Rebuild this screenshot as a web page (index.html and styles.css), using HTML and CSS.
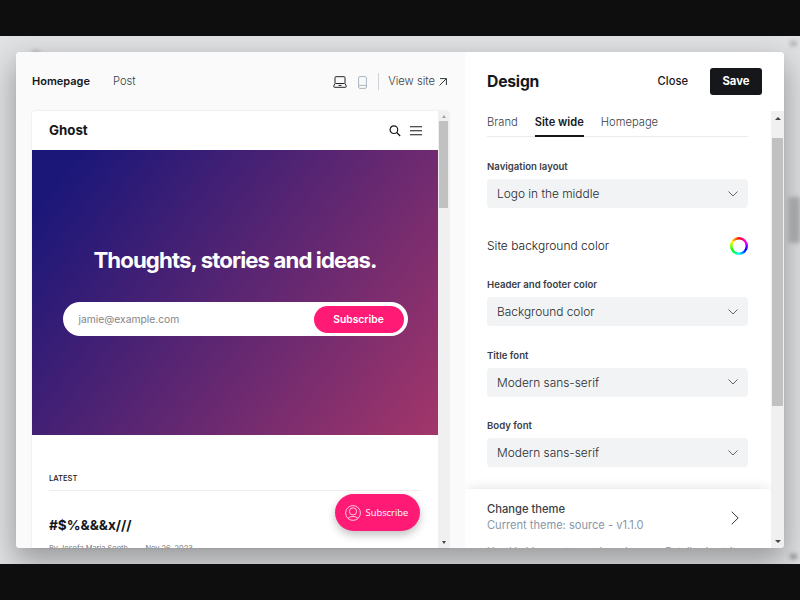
FILE: index.html
```html
<!DOCTYPE html>
<html lang="en">
<head>
<meta charset="utf-8">
<title>Design</title>
<link rel="stylesheet" href="styles.css">
</head>
<body>
<div class="stage">
  <i class="ghost-mark mark-title"></i><i class="ghost-mark mark-up"></i><i class="ghost-mark mark-thumb"></i><i class="ghost-mark mark-down"></i>
  <main class="modal">
    <section class="preview">
      <header class="preview-bar">
        <nav class="pages"><b>Homepage</b><span>Post</span></nav>
        <div class="tools">
          <svg class="laptop" width="14" height="12" viewBox="0 0 14 12" fill="none" stroke="#222529" stroke-linejoin="round"><rect x="2" y=".7" width="10" height="6.8" rx=".8"/><path d="M2 7.5L.7 10.2Q.6 11.3 1.6 11.3H12.4Q13.4 11.3 13.3 10.2L12 7.5M5.5 9.4H8.5"/></svg>
          <svg class="phone" width="9" height="13" viewBox="0 0 9 13" fill="none" stroke="#abb7c4"><rect x=".6" y=".6" width="7.8" height="11.8" rx="1.4"/><path d="M.6 9.4H8.4"/></svg>
          <span class="rule"></span>
          <span class="view">View site</span>
          <svg class="out" width="8" height="8" viewBox="0 0 8 8" fill="none" stroke="#33373b"><path d="M.5 7.5L7.4 .6M1 .6H7.4V7"/></svg>
        </div>
      </header>
      <div class="browser">
        <div class="page">
          <header class="site-head">
            <strong>Ghost</strong>
            <svg width="12" height="12" viewBox="0 0 12 12" fill="none" stroke="#15171a" stroke-width="1.2"><circle cx="4.9" cy="4.7" r="3.8"/><path d="M7.7 7.5L11.2 11"/></svg>
            <svg width="12" height="10" viewBox="0 0 12 10" fill="none" stroke="#15171a" stroke-width="1.1"><path d="M0 .8H12M0 4.8H12M0 8.8H12"/></svg>
          </header>
          <div class="hero">
            <h1>Thoughts, stories and ideas.</h1>
            <div class="signup"><span>jamie@example.com</span><b>Subscribe</b></div>
          </div>
          <div class="latest">
            <h2>LATEST</h2>
            <h3>#$%&amp;&amp;&amp;x///</h3>
            <p>By Josefa Maria Sooth <span>—</span> Nov 26, 2023</p>
          </div>
          <div class="portal">
            <svg width="16" height="16" viewBox="0 0 16 16" fill="none" stroke="#fff" stroke-width=".75"><circle cx="8" cy="8" r="7.4"/><circle cx="8" cy="6.4" r="3.6"/><path d="M3 13.3Q5 11.4 8 11.4T13 13.3"/></svg>
            <span>Subscribe</span>
          </div>
        </div>
        <div class="scroll small"><i class="up"></i><i class="thumb"></i><i class="down"></i></div>
      </div>
    </section>
    <aside class="settings">
      <header class="set-head"><h2>Design</h2><span>Close</span><b>Save</b></header>
      <div class="set-body">
        <div class="form">
          <nav class="tabs"><span>Brand</span><b>Site wide</b><span>Homepage</span></nav>
          <div class="field first"><label>Navigation layout</label><div class="select"><span>Logo in the middle</span><svg width="10" height="6" viewBox="0 0 10 6"><path d="M.5 .5L5 5L9.5 .5"/></svg></div></div>
          <div class="color"><span>Site background color</span><i class="wheel"></i></div>
          <div class="field"><label>Header and footer color</label><div class="select"><span>Background color</span><svg width="10" height="6" viewBox="0 0 10 6"><path d="M.5 .5L5 5L9.5 .5"/></svg></div></div>
          <div class="field"><label>Title font</label><div class="select"><span>Modern sans-serif</span><svg width="10" height="6" viewBox="0 0 10 6"><path d="M.5 .5L5 5L9.5 .5"/></svg></div></div>
          <div class="field"><label>Body font</label><div class="select"><span>Modern sans-serif</span><svg width="10" height="6" viewBox="0 0 10 6"><path d="M.5 .5L5 5L9.5 .5"/></svg></div></div>
          <footer class="theme">
            <div class="theme-row"><div><b>Change theme</b><span>Current theme: source - v1.1.0</span></div>
            <svg width="8" height="14" viewBox="0 0 8 14" fill="none" stroke="#33373b"><path d="M.7 .7L7.2 7L.7 13.3"/></svg></div>
            <p class="hint">Used in blog posts, cards and pages. Details about it</p>
          </footer>
        </div>
        <div class="scroll"><i class="up"></i><i class="thumb"></i><i class="down"></i></div>
      </div>
    </aside>
  </main>
</div>
</body>
</html>
```
FILE: styles.css
```css
* { box-sizing: border-box; }
body { margin: 0; height: 600px; padding: 36px 0; background: #0e0e0e; font-family: Inter, sans-serif; color: #15171a; overflow: hidden; }
h1, h2, h3, p { margin: 0; }
svg { display: block; flex: none; }
.stage { position: relative; height: 528px; padding: 16px; background: #e1e2e4; overflow: hidden; }
.ghost-mark { position: absolute; background: #8c8e90; filter: blur(2px); }
.mark-title { left: 32px; top: 14px; width: 8px; height: 6px; opacity: .4; }
.mark-up { left: 790px; top: 5px; width: 7px; height: 5px; opacity: .6; }
.mark-thumb { z-index: 2; left: 788px; top: 161px; width: 12px; height: 46px; background: #a2a4a6; }
.mark-down { z-index: 2; left: 790px; top: 518px; width: 7px; height: 5px; }
.modal { position: relative; display: flex; height: 496px; border-radius: 4px; background: #fff; box-shadow: 0 0 1px rgba(0,0,0,.1), 0 12px 30px 2px rgba(0,0,0,.32); }

.preview { width: 449px; padding: 0 16px; background: #fafafa; border-radius: 4px 0 0 4px; display: flex; flex-direction: column; }
.preview-bar { height: 59px; padding-bottom: 1px; display: flex; justify-content: space-between; align-items: center; font-size: 11.4px; }
.pages { display: flex; gap: 23px; }
.pages b { font-size: 11px; font-weight: 600; }
.pages span, .view { color: #394047; font-weight: 300; }
.pages span { font-size: 11.2px; }
.tools { display: flex; align-items: center; }
.laptop { position: relative; top: 1px; }
.phone { position: relative; top: 1px; margin-left: 11px; }
.rule { width: 1px; height: 17px; margin: 0 9px 0 11px; background: #ced4d9; }
.view { font-size: 11.2px; }
.out { margin: 2px 2px 0 4px; }
.browser { flex: 1; min-height: 0; display: flex; overflow: hidden; border-radius: 4px 4px 0 0; box-shadow: 0 0 2px rgba(0,0,0,.14); }
.page { position: relative; width: 406px; background: #fff; overflow: hidden; }
.site-head { height: 39px; padding: 0 16px 0 17px; display: flex; align-items: center; gap: 9px; }
.site-head strong { flex: 1; margin-top: -1px; font-size: 13.3px; }
.hero { height: 285px; padding: 93px 31px 0; background: linear-gradient(127deg, #1b1779 8%, #a3366a 100%); display: flex; flex-direction: column; align-items: center; }
.hero h1 { color: #fff; font-size: 22.2px; line-height: 34px; letter-spacing: -.9px; white-space: nowrap; }
.signup { width: 345px; height: 34px; margin-top: 25px; padding: 0 4px 0 16px; border-radius: 17px; background: #fff; display: flex; justify-content: space-between; align-items: center; font-size: 10.3px; color: #858585; }
.signup b { width: 90px; height: 27px; border-radius: 14px; background: #ff1a75; color: #fff; text-align: center; line-height: 27px; font-weight: 600; }
.latest { padding: 37px 17px 0; }
.latest h2 { height: 19px; line-height: 13px; font-size: 7.6px; font-weight: 500; border-bottom: 1px solid #eee; }
.latest h3 { margin-top: 24px; font-size: 13.6px; line-height: 20px; }
.latest p { margin-top: 9px; font-size: 7.4px; line-height: 10px; color: #777; white-space: nowrap; }
.latest p span { margin: 0 3px; color: #bbb; }
.portal { position: absolute; right: 18px; bottom: 17px; width: 85px; height: 37px; border-radius: 19px; background: #ff1a75; display: flex; align-items: center; padding-left: 10px; gap: 4.5px; color: #fff; font: 9.4px "Open Sans", sans-serif; box-shadow: 0 4px 9px rgba(0,0,0,.24); }

.scroll { width: 13px; background: #f0f0f0; display: flex; flex-direction: column; align-items: center; }
.scroll i { flex: none; }
.scroll .up { margin-top: 6px; border: 3px solid transparent; border-top: 0; border-bottom: 3px solid #444; }
.scroll .thumb { width: 11px; height: 268px; margin-top: 18px; background: #c1c1c1; }
.scroll .down { margin: auto 0 5px; border: 3px solid transparent; border-bottom: 0; border-top: 3px solid #444; }
.scroll.small { width: 11px; }
.small .up { margin-top: 4px; border-width: 0 2.5px 3px; border-bottom-color: #a3a3a3; }
.small .thumb { width: 9px; height: 87px; margin-top: 3px; }
.small .down { margin-bottom: 4px; border-width: 3px 2.5px 0; }

.settings { width: 319px; display: flex; flex-direction: column; border-radius: 0 4px 4px 0; overflow: hidden; background: #fff; }
.set-head { height: 59px; padding: 0 22px 1px; display: flex; align-items: center; }
.set-head h2 { flex: 1; font-size: 15.7px; letter-spacing: -.2px; }
.set-head span { font-size: 11.2px; font-weight: 500; }
.set-head b { width: 52px; height: 27px; margin: 1px 0 0 22px; border-radius: 3px; background: #15171a; color: #fff; font-size: 11.3px; line-height: 26px; text-align: center; }
.set-body { flex: 1; min-height: 0; display: flex; }
.form { width: 306px; padding: 0 23px 0 22px; overflow: hidden; }
.tabs { height: 26px; display: flex; gap: 17px; border-bottom: 1px solid #e9ebed; font-size: 11.2px; line-height: 22px; }
.tabs span { color: #394047; font-weight: 300; }
.tabs b { height: 26px; border-bottom: 2px solid #15171a; font-size: 11.1px; font-weight: 600; }
.field { height: 70.5px; }
.field.first { margin-top: 22px; height: 70px; }
.field label { display: block; height: 20px; font-size: 9.6px; line-height: 15px; font-weight: 600; color: #394047; }
.select { height: 29px; padding: 0 10px 0 10px; border-radius: 4px; background: #f1f3f4; display: flex; justify-content: space-between; align-items: center; font-size: 11.9px; font-weight: 300; color: #282c30; }
.select svg { fill: none; stroke: #50565b; stroke-width: .9; }
.color { height: 48px; display: flex; justify-content: space-between; align-items: center; padding-bottom: 15px; font-size: 12px; font-weight: 300; }
.wheel { width: 18px; height: 18px; border-radius: 50%; background: radial-gradient(circle, #fff 6.2px, transparent 6.8px), conic-gradient(red, magenta, blue, cyan, lime, yellow, red); }
.theme { position: relative; margin: 0 -23px 0 -22px; height: 60px; padding: 12px 32px 0 22px; background: #fff; box-shadow: 0 0 14px -3px rgba(0,0,0,.2); overflow: hidden; }
.theme-row { display: flex; align-items: center; justify-content: space-between; font-size: 11.2px; line-height: 16.5px; }
.theme-row svg { margin-top: 2px; }
.theme-row b, .theme-row span { display: block; }
.theme-row b { color: #394047; font-weight: 500; }
.theme-row span { color: #8897a8; font-weight: 400; font-size: 11.1px; }
.hint { margin-top: 11px; font-size: 10px; line-height: 12px; color: #8e9499; white-space: nowrap; }
```
